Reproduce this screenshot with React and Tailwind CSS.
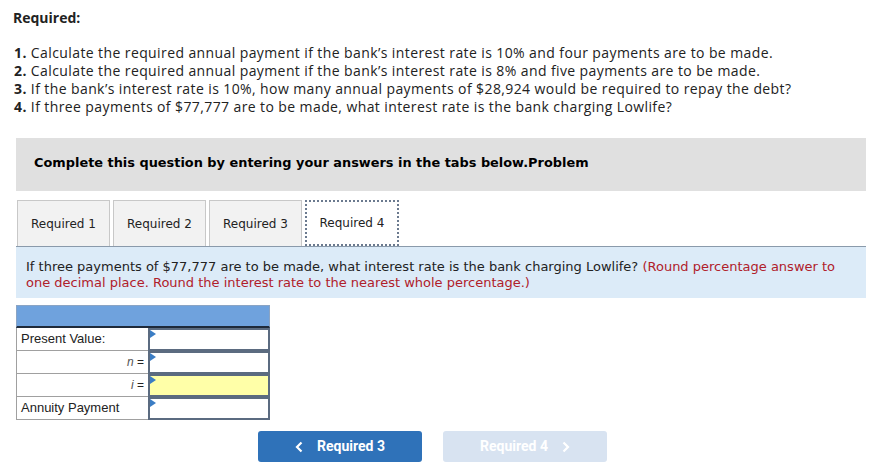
import React from 'react';

const questions = [
    ['1.', 'Calculate the required annual payment if the bank’s interest rate is 10% and four payments are to be made.'],
    ['2.', 'Calculate the required annual payment if the bank’s interest rate is 8% and five payments are to be made.'],
    ['3.', 'If the bank’s interest rate is 10%, how many annual payments of $28,924 would be required to repay the debt?'],
    ['4.', 'If three payments of $77,777 are to be made, what interest rate is the bank charging Lowlife?'],
];

const tabs = ['Required 1', 'Required 2', 'Required 3', 'Required 4'];

const rows = [
    { label: 'Present Value:', align: 'left' },
    { label: 'n =', align: 'right', italic: true },
    { label: 'i =', align: 'right', italic: true, yellow: true },
    { label: 'Annuity Payment', align: 'left' },
];

function InputCell({ yellow }) {
    return (
        <div className="relative h-full border-2 border-[#5b6b80]">
            <div className={`h-full ${yellow ? 'bg-[#ffffa8]' : 'bg-white'}`} />
            <span className="absolute left-0 top-0 w-0 h-0 border-t-[4px] border-b-[4px] border-l-[6px] border-t-transparent border-b-transparent border-l-[#3b7dc4]" />
        </div>
    );
}

export default function App() {
    return (
        <div className="w-[885px] h-[475px] bg-white overflow-hidden relative">
            <div className="pl-[13px] pt-[9px] font-['Open_Sans',sans-serif] text-[#222]">
                <div className="text-[14px] font-bold h-[18px] leading-[18px]">Required:</div>
                <div className="mt-[17px] text-[14px] leading-[18px] pl-[1px] tracking-[0.4px]">
                    {questions.map(([n, q]) => (
                        <div key={n} className="whitespace-nowrap">
                            <span className="font-bold">{n}</span> {q}
                        </div>
                    ))}
                </div>
            </div>

            <div className="mx-[16px] w-[850px] mt-[22px] h-[53px] bg-[#e0e0e0] flex items-center pl-[18px] pb-[3px] font-['DejaVu_Sans',Verdana,sans-serif] font-bold text-[12.9px] text-black">
                Complete this question by entering your answers in the tabs below.Problem
            </div>

            <div className="mx-[16px] w-[850px] mt-[9px] flex gap-[3px] pl-[1px] font-['DejaVu_Sans',Verdana,sans-serif] text-[12px] text-[#222]">
                {tabs.map((t, i) => (
                    <div
                        key={t}
                        className={
                            i === 3
                                ? 'w-[94px] h-[46px] flex items-center justify-center bg-white border-2 border-dotted border-[#6b7a8f]'
                                : 'w-[93px] h-[46px] flex items-center justify-center bg-[#f2f2f2] border border-[#c8c8c8] border-b-0'
                        }
                    >
                        {t}
                    </div>
                ))}
            </div>

            <div className="mx-[16px] w-[850px] h-[52px] bg-[#dcebf8] border-t border-[#8a9aab] pl-[10px] pr-[14px] pt-[12px] font-['DejaVu_Sans',Verdana,sans-serif] text-[13px] leading-[16px] text-[#222]">
                If three payments of $77,777 are to be made, what interest rate is the bank charging Lowlife?{' '}
                <span className="text-[#b0202a]">
                    (Round percentage answer to one decimal place. Round the interest rate to the nearest whole percentage.)
                </span>
            </div>

            <div className="ml-[16px] mt-[7px] w-[254px] font-['Liberation_Sans',Arial,sans-serif] text-[13px] text-[#222]">
                <div className="h-[23px] bg-[#6fa2dd] border border-[#8aa4c4] border-b-2 border-b-[#1e2a3a]" />
                {rows.map((r) => (
                    <div key={r.label} className="flex h-[23px]">
                        <div
                            className={`w-[132px] border-l border-b border-[#a0a0a0] flex items-center px-[4px] ${
                                r.align === 'right' ? 'justify-end' : ''
                            }`}
                        >
                            {r.italic ? (
                                <span className="text-[12px]">
                                    <i className="text-[#555]">{r.label.split(' ')[0]}</i> =
                                </span>
                            ) : (
                                r.label
                            )}
                        </div>
                        <div className="w-[122px]">
                            <InputCell yellow={r.yellow} />
                        </div>
                    </div>
                ))}
            </div>

            <div className="flex ml-[258px] mt-[11px] gap-[21px] font-['Roboto',sans-serif] font-bold text-[14px]">
                <div className="w-[164px] h-[31px] rounded-[3px] bg-[#2f72b9] text-white flex items-center justify-center gap-[14px]">
                    <svg width="8" height="12" viewBox="0 0 8 12" fill="none">
                        <path d="M6.5 1.5L2 6l4.5 4.5" stroke="white" strokeWidth="2.2" />
                    </svg>
                    Required 3
                </div>
                <div className="w-[164px] h-[31px] rounded-[3px] bg-[#d8e3f1] text-white flex items-center justify-center gap-[14px]">
                    Required 4
                    <svg width="8" height="12" viewBox="0 0 8 12" fill="none">
                        <path d="M1.5 1.5L6 6l-4.5 4.5" stroke="white" strokeWidth="2.2" />
                    </svg>
                </div>
            </div>
        </div>
    );
}
